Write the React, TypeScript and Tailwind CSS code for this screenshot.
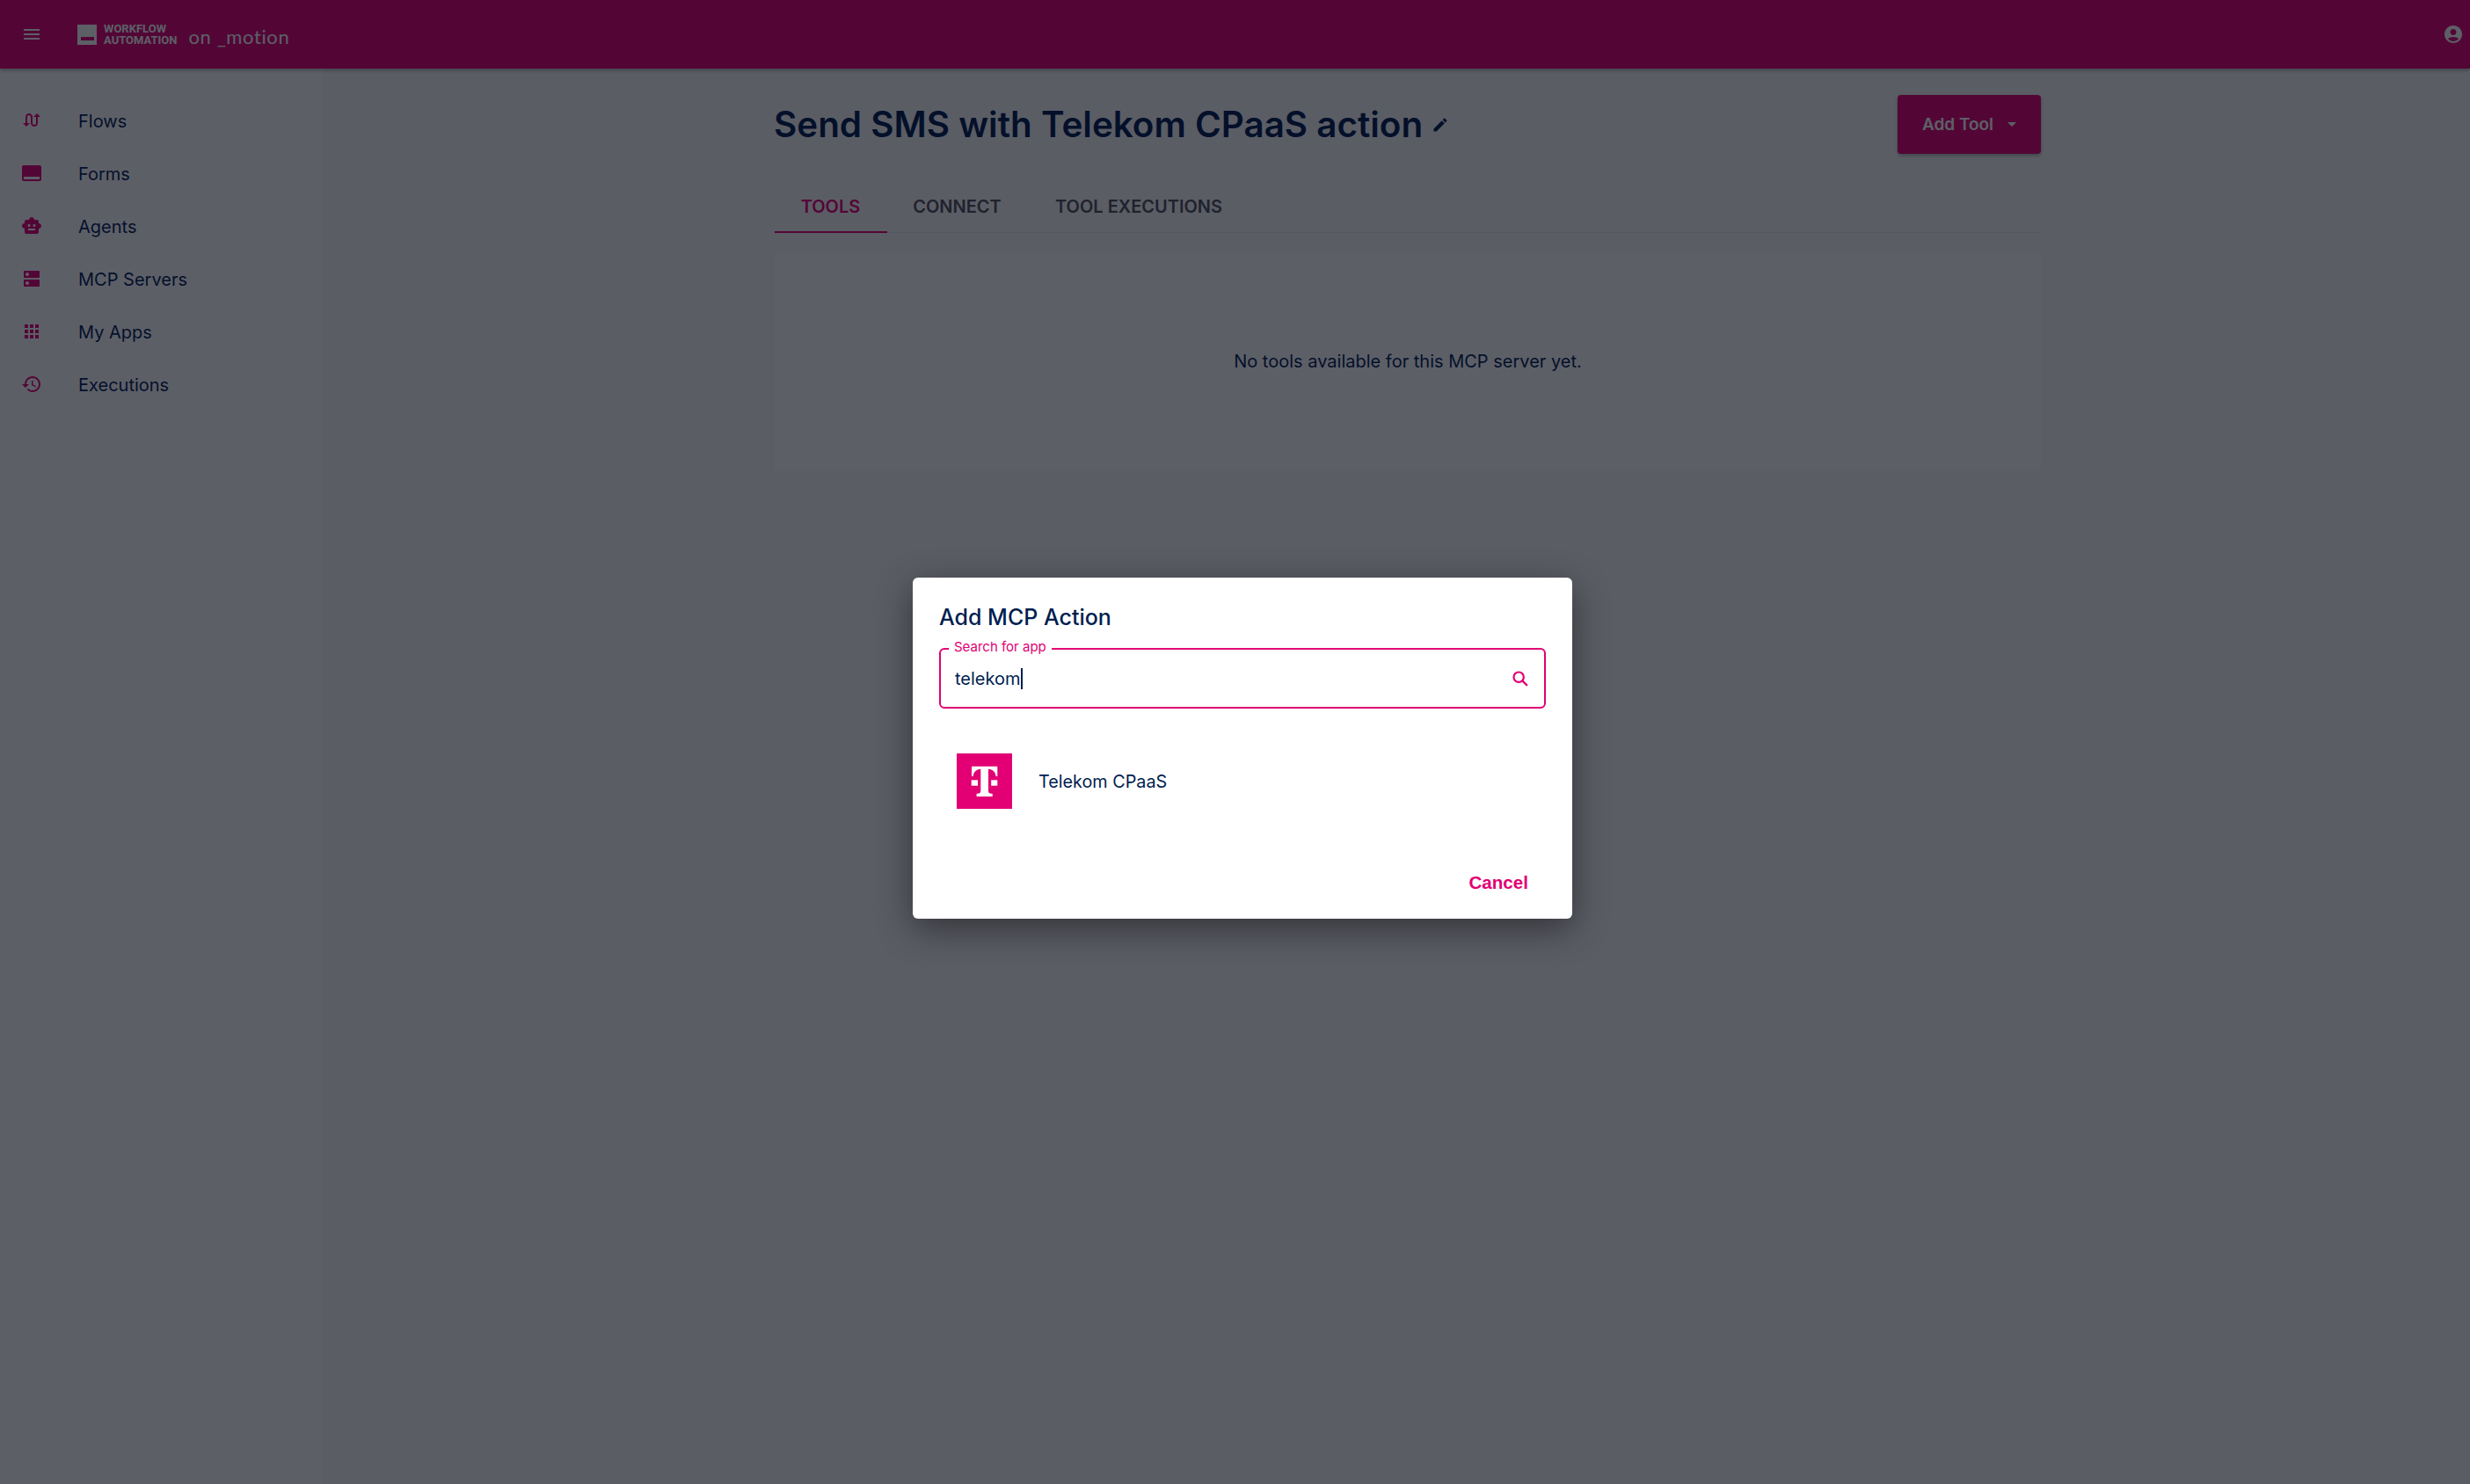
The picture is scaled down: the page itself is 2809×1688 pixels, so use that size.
import React from "react";

const navItems = [
  {
    name: "Flows",
    icon: "M18 4l-4 4h3v7c0 1.1-.9 2-2 2s-2-.9-2-2V8c0-2.21-1.79-4-4-4S5 5.79 5 8v7H2l4 4 4-4H7V8c0-1.1.9-2 2-2s2 .9 2 2v7c0 2.21 1.79 4 4 4s4-1.79 4-4V8h3l-4-4z",
  },
  {
    name: "Forms",
    icon: "M21 3H3c-1.1 0-2 .9-2 2v14c0 1.1.9 2 2 2h18c1.1 0 2-.9 2-2V5c0-1.1-.9-2-2-2zm0 16H3v-3h18v3z",
  },
  {
    name: "Agents",
    icon: "M20 9V7c0-1.1-.9-2-2-2h-3c0-1.66-1.34-3-3-3S9 3.34 9 5H6c-1.1 0-2 .9-2 2v2c-1.66 0-3 1.34-3 3s1.34 3 3 3v4c0 1.1.9 2 2 2h12c1.1 0 2-.9 2-2v-4c1.66 0 3-1.34 3-3s-1.34-3-3-3zM7.5 11.5c0-.83.67-1.5 1.5-1.5s1.5.67 1.5 1.5S9.83 13 9 13s-1.5-.67-1.5-1.5zM16 17H8v-2h8v2zm-1-4c-.83 0-1.5-.67-1.5-1.5S14.17 10 15 10s1.5.67 1.5 1.5S15.83 13 15 13z",
  },
  {
    name: "MCP Servers",
    icon: "M20 13H4c-.55 0-1 .45-1 1v6c0 .55.45 1 1 1h16c.55 0 1-.45 1-1v-6c0-.55-.45-1-1-1zM7 19c-1.1 0-2-.9-2-2s.9-2 2-2 2 .9 2 2-.9 2-2 2zM20 3H4c-.55 0-1 .45-1 1v6c0 .55.45 1 1 1h16c.55 0 1-.45 1-1V4c0-.55-.45-1-1-1zM7 9c-1.1 0-2-.9-2-2s.9-2 2-2 2 .9 2 2-.9 2-2 2z",
  },
  {
    name: "My Apps",
    icon: "M4 8h4V4H4v4zm6 12h4v-4h-4v4zm-6 0h4v-4H4v4zm0-6h4v-4H4v4zm6 0h4v-4h-4v4zm6-10v4h4V4h-4zm-6 4h4V4h-4v4zm6 6h4v-4h-4v4zm0 6h4v-4h-4v4z",
  },
  {
    name: "Executions",
    icon: "M13 3c-4.97 0-9 4.03-9 9H1l3.89 3.89.07.14L9 12H6c0-3.87 3.13-7 7-7s7 3.13 7 7-3.13 7-7 7c-1.93 0-3.68-.79-4.94-2.06l-1.42 1.42C8.27 19.99 10.51 21 13 21c4.97 0 9-4.03 9-9s-4.03-9-9-9zm-1 5v5l4.28 2.54.72-1.21-3.5-2.08V8H12z",
  },
];

function Icon({ d, className }: { d: string; className?: string }) {
  return (
    <svg viewBox="0 0 24 24" fill="currentColor" className={className}>
      <path d={d} />
    </svg>
  );
}

function Header() {
  return (
    <header className="h-[78px] shrink-0 flex items-center bg-[#e20074] text-white shadow-[0_2px_4px_rgba(0,0,0,0.3)] relative z-10">
      <div className="w-[88px] pl-[24px]">
        <Icon d="M3 18h18v-2H3v2zm0-5h18v-2H3v2zm0-7v2h18V6H3z" className="w-[24px] h-[24px]" />
      </div>
      <div className="flex items-center">
        <div className="w-[22px] h-[23px] bg-white flex items-end justify-center pb-[5px]">
          <div className="w-[15px] h-[4px] bg-[#e20074]" />
        </div>
        <div className="ml-[8px] font-['Roboto',sans-serif] font-bold text-[13px] leading-[13px]">
          <div>WORKFLOW</div>
          <div>AUTOMATION</div>
        </div>
        <div className="ml-[13px] mt-[6px] font-['Lato',sans-serif] text-[22px] leading-none tracking-[0.6px]">
          on _motion
        </div>
      </div>
      <div className="ml-auto pr-[7px]">
        <Icon
          d="M12 2C6.48 2 2 6.48 2 12s4.48 10 10 10 10-4.48 10-10S17.52 2 12 2zm0 4c1.93 0 3.5 1.57 3.5 3.5S13.93 13 12 13s-3.5-1.57-3.5-3.5S10.07 6 12 6zm0 14c-2.03 0-4.43-.82-6.14-2.88C7.55 15.8 9.68 15 12 15s4.45.8 6.14 2.12C16.43 19.18 14.03 20 12 20z"
          className="w-[24px] h-[24px]"
        />
      </div>
    </header>
  );
}

function Sidebar() {
  return (
    <aside className="w-[368px] shrink-0 bg-white pt-[29px]">
      {navItems.map((item) => (
        <div key={item.name} className="h-[60px] flex items-center pl-[24px] text-[#001e50]">
          <Icon d={item.icon} className="w-[24px] h-[24px] text-[#e20074]" />
          <span className="ml-[41px] text-[20px] relative top-[1px]">{item.name}</span>
        </div>
      ))}
    </aside>
  );
}

function Main() {
  return (
    <main className="flex-1 bg-[#fafafa] pl-[512px] pr-[120px] border-l border-[#f0f0f0]">
      <div className="w-[1440px]">
        <div className="flex items-center justify-between pt-[30px]">
          <div className="flex items-center -ml-[1px]">
            <h1 className="text-[40.4px] font-semibold text-[#001e50] leading-[60px]">
              Send SMS with Telekom CPaaS action
            </h1>
            <Icon
              d="M3 17.25V21h3.75L17.81 9.94l-3.75-3.75L3 17.25zM20.71 7.04a1 1 0 0 0 0-1.41l-2.34-2.34a1 1 0 0 0-1.41 0l-1.83 1.83 3.75 3.75 1.83-1.83z"
              className="ml-[10px] w-[20px] h-[20px] text-[#001e50]"
            />
          </div>
          <button className="w-[163px] h-[67px] flex items-center justify-center rounded-[4px] bg-[#e20074] text-[19px] font-semibold text-white shadow-[0_2px_4px_rgba(0,0,0,0.3)]">
            <span className="relative top-[1px]">Add Tool</span>
            <span className="ml-[16px] w-0 h-0 border-x-[5px] border-x-transparent border-t-[5px] border-t-white" />
          </button>
        </div>

        <div className="mt-[31px] flex border-b border-[#e5e7eb] h-[59px] text-[20px] font-semibold">
          <div className="w-[128px] h-[59px] pr-[1px] flex items-center justify-center text-[#e20074] border-b-2 border-[#e20074]">
            TOOLS
          </div>
          <div className="w-[159px] flex items-center justify-center text-[#52525b]">CONNECT</div>
          <div className="ml-[24px] w-[206px] flex items-center justify-center text-[#52525b]">TOOL EXECUTIONS</div>
        </div>

        <div className="mt-[22px] h-[249px] pb-[1px] bg-white rounded-[4px] flex items-center justify-center text-[20px] text-[#001e50]">
          No tools available for this MCP server yet.
        </div>
      </div>
    </main>
  );
}

function AddActionDialog() {
  return (
    <div className="absolute left-[1038px] top-[657px] w-[750px] h-[388px] bg-white rounded-[6px] shadow-[0_11px_40px_rgba(0,0,0,0.45)] px-[30px] text-[#001e50]">
      <h2 className="pt-[27px] text-[25px] font-medium leading-[36px]">Add MCP Action</h2>
      <div className="relative mt-[17px] h-[69px] w-[690px] border-2 border-[#e20074] rounded-[6px] flex items-center pl-[16px] pr-[16px]">
        <span className="absolute left-[9px] top-[-12px] bg-white px-[6px] text-[15px] leading-[18px] text-[#e20074]">
          Search for app
        </span>
        <span className="text-[20px]">telekom</span>
        <span className="w-[2px] h-[24px] bg-[#001e50]" />
        <svg viewBox="0 0 24 24" fill="none" stroke="#e20074" strokeWidth="2.4" className="ml-auto w-[22px] h-[22px]">
          <circle cx="10" cy="10" r="6.2" />
          <path d="m14.6 14.6 6 6" />
        </svg>
      </div>
      <div className="mt-[51px] ml-[20px] flex items-center">
        <svg viewBox="0 0 63 63" className="w-[63px] h-[63px]">
          <rect width="63" height="63" fill="#e20074" />
          <path
            fill="#fff"
            d="M17 14.7H46.3V26H44.6C44.2 21 41 18 36 17.7V42c0 3 .8 3.6 4.7 3.8V49H22.6v-3.2c3.9-.2 4.7-.8 4.7-3.8V17.7C22.3 18 19.1 21 18.7 26H17Z"
          />
          <rect x="16.7" y="30.3" width="7.3" height="6.4" fill="#fff" />
          <rect x="39.2" y="30.3" width="7.1" height="6.4" fill="#fff" />
        </svg>
        <span className="ml-[30px] text-[19.8px] relative top-[1px]">Telekom CPaaS</span>
      </div>
      <button className="absolute right-[50px] top-[333px] font-['Liberation_Sans',sans-serif] font-bold text-[20.6px] leading-[28px] text-[#e20074]">
        Cancel
      </button>
    </div>
  );
}

export default function App() {
  return (
    <div className="relative h-[1688px] w-[2809px] overflow-hidden flex flex-col font-['Inter',sans-serif]">
      <Header />
      <div className="flex flex-1">
        <Sidebar />
        <Main />
      </div>
      <div className="absolute inset-0 z-20 bg-[rgba(6,9,22,0.65)]" />
      <div className="absolute inset-0 z-30">
        <AddActionDialog />
      </div>
    </div>
  );
}
